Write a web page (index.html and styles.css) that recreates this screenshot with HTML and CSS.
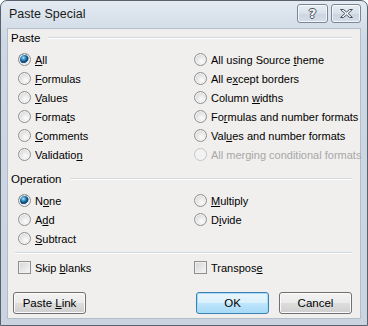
FILE: index.html
```html
<!DOCTYPE html>
<html lang="en">
<head>
<meta charset="utf-8">
<title>Paste Special</title>
<link rel="stylesheet" href="styles.css">
</head>
<body>
  <div class="window">
    <div class="titlebar">
      <span class="title">Paste Special</span>
      <div class="caption-buttons">
        <button class="cap help"><span>?</span></button>
        <button class="cap close">
          <svg width="15" height="11" viewBox="0 0 15 11"><path d="M1.5 1.5h3l3 2.6 3-2.6h3l-4.4 4 4.4 4h-3l-3-2.6-3 2.6h-3l4.4-4z" fill="#f4f6f8" stroke="#4a5360" stroke-width="1" stroke-linejoin="round"/></svg>
        </button>
      </div>
    </div>
    <div class="client">
      <div class="group-head"><span>Paste</span><i></i></div>
      <div class="options">
        <label class="opt"><span class="radio on"></span><span><u>A</u>ll</span></label>
        <label class="opt"><span class="radio"></span><span>All using Source <u>t</u>heme</span></label>
        <label class="opt"><span class="radio"></span><span><u>F</u>ormulas</span></label>
        <label class="opt"><span class="radio"></span><span>All e<u>x</u>cept borders</span></label>
        <label class="opt"><span class="radio"></span><span><u>V</u>alues</span></label>
        <label class="opt"><span class="radio"></span><span>Column <u>w</u>idths</span></label>
        <label class="opt"><span class="radio"></span><span>Forma<u>t</u>s</span></label>
        <label class="opt"><span class="radio"></span><span>Fo<u>r</u>mulas and number formats</span></label>
        <label class="opt"><span class="radio"></span><span><u>C</u>omments</span></label>
        <label class="opt"><span class="radio"></span><span>Val<u>u</u>es and number formats</span></label>
        <label class="opt"><span class="radio"></span><span>Validatio<u>n</u></span></label>
        <label class="opt disabled"><span class="radio"></span><span>All merging conditional formats</span></label>
      </div>
      <div class="group-head op"><span>Operation</span><i></i></div>
      <div class="options">
        <label class="opt"><span class="radio on"></span><span>N<u>o</u>ne</span></label>
        <label class="opt"><span class="radio"></span><span><u>M</u>ultiply</span></label>
        <label class="opt"><span class="radio"></span><span>A<u>d</u>d</span></label>
        <label class="opt"><span class="radio"></span><span>D<u>i</u>vide</span></label>
        <label class="opt"><span class="radio"></span><span><u>S</u>ubtract</span></label>
      </div>
      <div class="rule"></div>
      <div class="options checks">
        <label class="opt"><span class="check"></span><span>Skip <u>b</u>lanks</span></label>
        <label class="opt"><span class="check"></span><span>Transpos<u>e</u></span></label>
      </div>
      <div class="buttons">
        <button class="btn">Paste <u>L</u>ink</button>
        <span class="spacer"></span>
        <button class="btn default">OK</button>
        <button class="btn">Cancel</button>
      </div>
    </div>
  </div>
</body>
</html>
```
FILE: styles.css
```css
* {
  margin: 0;
  padding: 0;
  box-sizing: border-box;
}

body {
  width: 368px;
  height: 326px;
  font-family: "Liberation Sans", Arial, sans-serif;
  font-size: 11px;
  color: #000;
}

.window {
  width: 368px;
  height: 326px;
  border: 1px solid #59626c;
  border-radius: 7px 7px 0 0;
  background: linear-gradient(#e3eaf2, #cdd8e4 40px, #c9d4e0);
  padding: 0 6px 6px;
  display: flex;
  flex-direction: column;
}

.titlebar {
  height: 27px;
  display: flex;
  align-items: flex-start;
}

.title {
  font-size: 12.5px;
  padding: 6px 0 0 2px;
  color: #1b1b1b;
}

.caption-buttons {
  margin-left: auto;
  display: flex;
  gap: 3px;
  padding-top: 3px;
}

.cap {
  height: 19px;
  border: 1px solid #7a8797;
  border-radius: 3px;
  background: linear-gradient(#e9eef4, #d7e0ea 50%, #cbd5e1 51%, #d6dee8);
  box-shadow: inset 0 0 0 1px rgba(255,255,255,0.7);
  display: flex;
  align-items: center;
  justify-content: center;
}

.cap.help {
  width: 31px;
}

.cap.close {
  width: 30px;
}

.cap.help span {
  font-family: "DejaVu Sans", sans-serif;
  font-weight: bold;
  font-size: 13px;
  color: #f4f6f8;
  text-shadow: 1px 0 0 #4a5360, -1px 0 0 #4a5360, 0 1px 0 #4a5360, 0 -1px 0 #4a5360;
}

.client {
  flex: 1;
  background: #f0efed;
  border: 1px solid #b4bec9;
  padding: 1px 8px 0 3px;
  display: flex;
  flex-direction: column;
}

.group-head {
  display: flex;
  align-items: center;
  height: 16px;
  gap: 8px;
  font-size: 11.5px;
}

.group-head i {
  flex: 1;
  height: 2px;
  border-top: 1px solid #d3d8dd;
  border-bottom: 1px solid #fff;
}

.group-head.op {
  margin-top: 7px;
}

.options {
  display: grid;
  grid-template-columns: 176px 1fr;
  grid-auto-rows: 19px;
  padding: 4px 0 0 7px;
}

.opt {
  display: flex;
  align-items: center;
  gap: 4px;
  white-space: nowrap;
}

.opt.disabled {
  color: #a7a7a7;
}

.radio {
  width: 13px;
  height: 13px;
  border-radius: 50%;
  border: 1px solid #8f8f8f;
  background: radial-gradient(circle at 60% 65%, #fdfdfd, #d7d7d7 75%);
  box-shadow: inset 0 0 0 1px #f4f4f4;
}

.opt.disabled .radio {
  border-color: #c5c5c5;
  background: #f2f2f2;
}

.radio.on {
  background: radial-gradient(circle at 40% 35%, #bfe6fb 0, #3b94c8 2px, #0e4a7a 4px, #1c5a85 5px, #e8e8e8 5.5px, #d8d8d8 100%);
}

.rule {
  height: 2px;
  margin: 4px 0 0 4px;
  border-top: 1px solid #d3d8dd;
  border-bottom: 1px solid #fff;
}

.checks {
  padding-top: 4px;
}

.check {
  width: 13px;
  height: 13px;
  border: 1px solid #8f8f8f;
  background: linear-gradient(135deg, #d4d4d4, #f7f7f7);
  box-shadow: inset 0 0 0 1px #f0f0f0;
}

.buttons {
  display: flex;
  gap: 10px;
  margin-top: 15px;
  padding-left: 2px;
}

.spacer {
  flex: 1;
}

.btn {
  width: 73px;
  height: 22px;
  font-family: inherit;
  font-size: 11.5px;
  color: #000;
  border: 1px solid #707070;
  border-radius: 3px;
  background: linear-gradient(#f2f2f2, #ebebeb 50%, #dddddd 51%, #cfcfcf);
  box-shadow: inset 0 0 0 1px #fbfbfb;
}

.btn.default {
  border-color: #3c7fb1;
  box-shadow: inset 0 0 0 1px #a7dcf6;
  background: linear-gradient(#eaf6fd, #d9f0fc 50%, #bee6fd 51%, #a7d9f5);
}
```
